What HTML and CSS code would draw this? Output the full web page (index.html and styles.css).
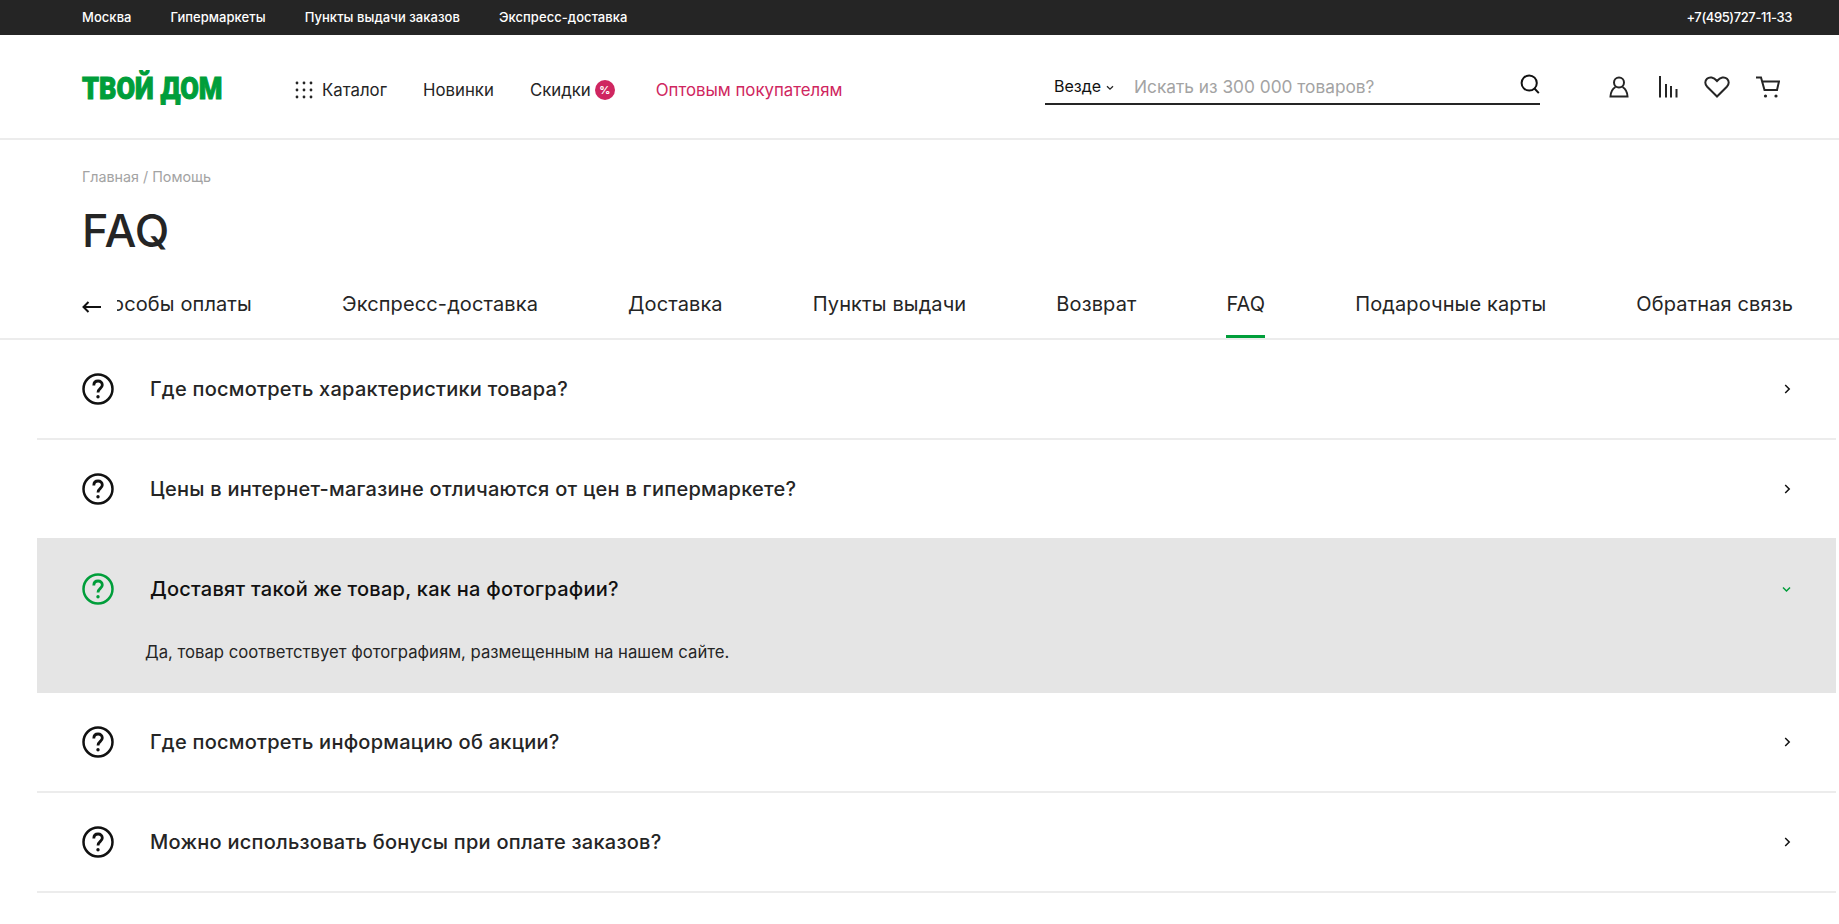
FILE: index.html
```html
<!DOCTYPE html>
<html lang="ru">
<head>
  <meta charset="UTF-8">
  <meta name="viewport" content="width=device-width, initial-scale=1.0">
  <title>FAQ</title>
  <link rel="stylesheet" href="styles.css">
</head>
<body>
  <!-- Top bar -->
  <div class="topbar">
    <div class="topbar-links">
      <a href="#">Москва</a>
      <a href="#">Гипермаркеты</a>
      <a href="#">Пункты выдачи заказов</a>
      <a href="#">Экспресс-доставка</a>
    </div>
    <a href="#" class="topbar-phone">+7(495)727-11-33</a>
  </div>

  <!-- Header -->
  <header class="header">
    <a href="#" class="logo">ТВОЙ ДОМ</a>
    <nav class="menu">
      <a href="#" class="menu-catalog">
        <svg width="18" height="18" viewBox="0 0 18 18" fill="#252525">
          <circle cx="2" cy="2" r="1.4"/><circle cx="9" cy="2" r="1.4"/><circle cx="16" cy="2" r="1.4"/>
          <circle cx="2" cy="9" r="1.4"/><circle cx="9" cy="9" r="1.4"/><circle cx="16" cy="9" r="1.4"/>
          <circle cx="2" cy="16" r="1.4"/><circle cx="9" cy="16" r="1.4"/><circle cx="16" cy="16" r="1.4"/>
        </svg>
        Каталог
      </a>
      <a href="#">Новинки</a>
      <a href="#" class="menu-sale">Скидки <span class="badge">%</span></a>
      <a href="#" class="menu-opt">Оптовым покупателям</a>
    </nav>
    <form class="search">
      <span class="search-where">Везде
        <svg class="search-arrow" width="8" height="6" viewBox="0 0 8 6" fill="none" stroke="#252525" stroke-width="1.3"><path d="M1 1.2l3 3 3-3"/></svg>
      </span>
      <span class="search-hint">Искать из 300 000 товаров?</span>
      <svg class="search-icon" width="20" height="20" viewBox="0 0 20 20" fill="none" stroke="#111" stroke-width="2"><circle cx="9.2" cy="9" r="7.6"/><path d="M14.5 14.5l4.3 4.6"/></svg>
    </form>
    <div class="header-icons">
      <svg width="20" height="22" viewBox="0 0 20 22" fill="none" stroke="#252525" stroke-width="2"><circle cx="10" cy="6.500" r="5"/><path d="M6.500 11c-2.500 1.500-4.800 4.500-5 9.500h17c-.2-5-2.500-8-5-9.500"/></svg>
      <svg class="icon-bars" width="20" height="22" viewBox="0 0 20 22" fill="none" stroke="#252525" stroke-width="2"><path d="M2 0v21.500M8 8v13.500M13 10v11.500M18.500 13v8.500"/></svg>
      <svg width="26" height="22" viewBox="0 0 26 22" fill="none" stroke="#252525" stroke-width="2"><path d="M13 20.500L3.200 10.800C.6 8.100.8 4.700 3 2.700c2.500-2.200 6.500-1.700 10 2.300 3.500-4 7.500-4.500 10-2.300 2.200 2 2.400 5.400-.2 8.100z"/></svg>
      <svg width="24" height="22" viewBox="0 0 24 22" fill="none" stroke="#252525" stroke-width="2"><path d="M0 1.500h5l3.500 12.500h12.500l2-8.500H6"/><circle cx="9.500" cy="20" r="1.600" fill="#252525" stroke="none"/><circle cx="20" cy="20" r="1.600" fill="#252525" stroke="none"/></svg>
    </div>
  </header>

  <!-- Page title -->
  <div class="crumbs">Главная / Помощь</div>
  <h1 class="title">FAQ</h1>

  <!-- Help tabs -->
  <div class="tabs">
    <svg class="tabs-back" width="19" height="12" viewBox="0 0 19 12" fill="none" stroke="#111" stroke-width="2"><path d="M19 6H2M6.500 1L1.500 6l5 5"/></svg>
    <div class="tabs-list">
      <a href="#">Способы оплаты</a>
      <a href="#">Экспресс-доставка</a>
      <a href="#">Доставка</a>
      <a href="#">Пункты выдачи</a>
      <a href="#">Возврат</a>
      <a href="#" class="active">FAQ</a>
      <a href="#">Подарочные карты</a>
      <a href="#">Обратная связь</a>
    </div>
  </div>

  <!-- Questions -->
  <div class="faq">
    <div class="faq-row">
      <svg class="faq-icon" width="32" height="32" viewBox="0 0 32 32" fill="none" stroke="currentColor" stroke-width="2.500"><circle cx="16" cy="16" r="14.500"/><path d="M11.800 12.500c0-3 2-4.500 4.300-4.500s4.200 1.500 4.200 4c0 3.300-4.300 3.500-4.300 7.500" stroke-width="2.800"/><circle cx="16" cy="23.800" r="1.700" fill="currentColor" stroke="none"/></svg>
      <span class="faq-text">Где посмотреть характеристики товара?</span>
      <svg width="7" height="10" viewBox="0 0 7 10" fill="none" stroke="#111" stroke-width="1.500"><path d="M1.200 1l4 4-4 4"/></svg>
    </div>
    <div class="faq-row">
      <svg class="faq-icon" width="32" height="32" viewBox="0 0 32 32" fill="none" stroke="currentColor" stroke-width="2.500"><circle cx="16" cy="16" r="14.500"/><path d="M11.800 12.500c0-3 2-4.500 4.300-4.500s4.200 1.500 4.200 4c0 3.300-4.300 3.500-4.300 7.500" stroke-width="2.800"/><circle cx="16" cy="23.800" r="1.700" fill="currentColor" stroke="none"/></svg>
      <span class="faq-text">Цены в интернет-магазине отличаются от цен в гипермаркете?</span>
      <svg width="7" height="10" viewBox="0 0 7 10" fill="none" stroke="#111" stroke-width="1.500"><path d="M1.200 1l4 4-4 4"/></svg>
    </div>
    <div class="faq-item open">
      <div class="faq-row">
        <svg class="faq-icon" width="32" height="32" viewBox="0 0 32 32" fill="none" stroke="currentColor" stroke-width="2.500"><circle cx="16" cy="16" r="14.500"/><path d="M11.800 12.500c0-3 2-4.500 4.300-4.500s4.200 1.500 4.200 4c0 3.300-4.300 3.500-4.300 7.500" stroke-width="2.800"/><circle cx="16" cy="23.800" r="1.700" fill="currentColor" stroke="none"/></svg>
        <span class="faq-text">Доставят такой же товар, как на фотографии?</span>
        <svg width="9" height="7" viewBox="0 0 9 7" fill="none" stroke="#009e3a" stroke-width="1.500"><path d="M1 1.500l3.500 3.500L8 1.500"/></svg>
      </div>
      <p class="faq-answer">Да, товар соответствует фотографиям, размещенным на нашем сайте.</p>
    </div>
    <div class="faq-row">
      <svg class="faq-icon" width="32" height="32" viewBox="0 0 32 32" fill="none" stroke="currentColor" stroke-width="2.500"><circle cx="16" cy="16" r="14.500"/><path d="M11.800 12.500c0-3 2-4.500 4.300-4.500s4.200 1.500 4.200 4c0 3.300-4.300 3.500-4.300 7.500" stroke-width="2.800"/><circle cx="16" cy="23.800" r="1.700" fill="currentColor" stroke="none"/></svg>
      <span class="faq-text">Где посмотреть информацию об акции?</span>
      <svg width="7" height="10" viewBox="0 0 7 10" fill="none" stroke="#111" stroke-width="1.500"><path d="M1.200 1l4 4-4 4"/></svg>
    </div>
    <div class="faq-row">
      <svg class="faq-icon" width="32" height="32" viewBox="0 0 32 32" fill="none" stroke="currentColor" stroke-width="2.500"><circle cx="16" cy="16" r="14.500"/><path d="M11.800 12.500c0-3 2-4.500 4.300-4.500s4.200 1.500 4.200 4c0 3.300-4.300 3.500-4.300 7.500" stroke-width="2.800"/><circle cx="16" cy="23.800" r="1.700" fill="currentColor" stroke="none"/></svg>
      <span class="faq-text">Можно использовать бонусы при оплате заказов?</span>
      <svg width="7" height="10" viewBox="0 0 7 10" fill="none" stroke="#111" stroke-width="1.500"><path d="M1.200 1l4 4-4 4"/></svg>
    </div>
  </div>
</body>
</html>
```

FILE: styles.css
```css
* {
  box-sizing: border-box;
}

body {
  margin: 0;
  height: 924px;
  overflow: hidden;
  background: #fff;
  color: #252525;
  font-family: Inter, "Noto Sans", Arial, sans-serif;
}

a {
  color: inherit;
  text-decoration: none;
}

/* Top bar */
.topbar {
  height: 35px;
  padding: 0 47px 2px 82px;
  background: #252525;
  color: #fff;
  font-size: 13px;
  font-weight: 500;
  letter-spacing: 0.05px;
  display: flex;
  align-items: center;
  justify-content: space-between;
}

.topbar-links {
  display: flex;
  gap: 39px;
}

.topbar-phone {
  letter-spacing: -0.4px;
}

/* Header */
.header {
  height: 105px;
  padding: 0 0 0 82px;
  border-bottom: 2px solid #ececec;
  display: flex;
  align-items: center;
}

.logo {
  width: 142px;
  margin-top: 4px;
  color: #009e3a;
  font-family: Roboto, sans-serif;
  font-size: 31px;
  font-weight: 900;
  line-height: 1;
  white-space: nowrap;
  -webkit-text-stroke: 1px #009e3a;
  transform: scaleX(0.87);
  transform-origin: left center;
}

.menu {
  margin-left: 71px;
  padding-top: 7px;
  width: 750px;
  display: flex;
  align-items: center;
  gap: 36px;
  font-size: 16.8px;
}

.menu-catalog {
  display: flex;
  align-items: center;
  gap: 9px;
}

.menu-sale {
  display: flex;
  align-items: center;
  gap: 4px;
}

.badge {
  width: 20px;
  height: 20px;
  border-radius: 50%;
  background: #cf2660;
  color: #fff;
  font-size: 11px;
  font-weight: 700;
  display: flex;
  align-items: center;
  justify-content: center;
}

.menu-opt {
  margin-left: 5px;
  color: #cf2660;
}

.search {
  width: 495px;
  height: 36px;
  border-bottom: 2px solid #252525;
  display: flex;
  align-items: center;
  font-size: 16px;
}

.search-where {
  margin-left: 9px;
  width: 80px;
  color: #111;
}

.search-arrow {
  margin-bottom: 1px;
}

.search-hint {
  flex: 1;
  padding-top: 1px;
  color: #a3a3a3;
  font-size: 17.3px;
}

.search-icon {
  margin-bottom: 3px;
}

.header-icons {
  margin-left: 69px;
  display: flex;
  align-items: center;
  gap: 26px;
}

.icon-bars {
  margin-left: 3px;
}

/* Page title */
.crumbs {
  margin: 28px 0 0 82px;
  color: #a3a3a3;
  font-size: 14.3px;
}

.title {
  margin: 21px 0 0 82px;
  font-size: 45px;
  font-weight: 500;
  line-height: 50px;
}

/* Tabs */
.tabs {
  height: 84px;
  padding: 0 46px 0 82px;
  border-bottom: 2px solid #ececec;
  display: flex;
  align-items: flex-start;
}

.tabs-back {
  flex: none;
  margin-top: 45px;
}

.tabs-list {
  flex: 1;
  min-width: 0;
  margin-left: 16px;
  overflow: hidden;
  display: flex;
  justify-content: flex-end;
  gap: 90px;
  font-size: 20px;
  letter-spacing: 0.12px;
  line-height: 28px;
  white-space: nowrap;
}

.tabs-list a {
  flex: none;
  height: 82px;
  padding-top: 34px;
}

.tabs-list .active {
  box-shadow: inset 0 -3px 0 #009e3a;
}

/* Questions */
.faq {
  margin: 0 3px 0 37px;
}

.faq-row {
  height: 100px;
  padding: 0 45px;
  color: #111;
  display: flex;
  align-items: center;
}

.faq > .faq-row {
  border-bottom: 2px solid #ececec;
}

.faq-icon {
  flex: none;
}

.faq-text {
  flex: 1;
  margin-left: 36px;
  color: #252525;
  font-size: 20px;
  font-weight: 500;
  letter-spacing: 0.25px;
}

.faq-item.open {
  height: 155px;
  margin-top: -2px;
  padding-top: 1px;
  background: #e5e5e5;
}

.open .faq-icon {
  color: #009e3a;
}

.open .faq-text {
  color: #111;
}

.faq-answer {
  margin: 3px 0 0 108px;
  font-size: 16.7px;
  color: #252525;
}
```
